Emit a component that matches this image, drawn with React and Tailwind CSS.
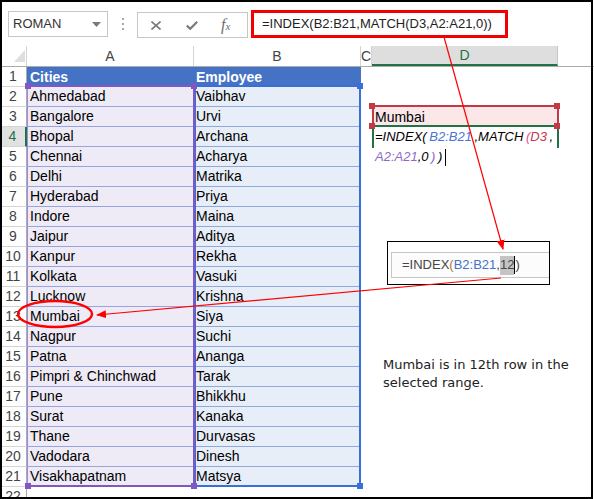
import React from "react";

const rows = [
  ["Ahmedabad", "Vaibhav"],
  ["Bangalore", "Urvi"],
  ["Bhopal", "Archana"],
  ["Chennai", "Acharya"],
  ["Delhi", "Matrika"],
  ["Hyderabad", "Priya"],
  ["Indore", "Maina"],
  ["Jaipur", "Aditya"],
  ["Kanpur", "Rekha"],
  ["Kolkata", "Vasuki"],
  ["Lucknow", "Krishna"],
  ["Mumbai", "Siya"],
  ["Nagpur", "Suchi"],
  ["Patna", "Ananga"],
  ["Pimpri & Chinchwad", "Tarak"],
  ["Pune", "Bhikkhu"],
  ["Surat", "Kanaka"],
  ["Thane", "Durvasas"],
  ["Vadodara", "Dinesh"],
  ["Visakhapatnam", "Matsya"],
];

function RowHeader({ n, active }) {
  return (
    <div
      className={
        active
          ? "w-[27px] h-full shrink-0 flex items-center justify-center bg-[#e1e1e1] border-r-2 border-r-[#217346] border-b border-b-[#d4d4d4] text-[#217346]"
          : "w-[27px] h-full shrink-0 flex items-center justify-center border-r border-r-[#ababab] border-b border-b-[#d4d4d4] text-[#444]"
      }
    >
      {n}
    </div>
  );
}

function Handle({ className }) {
  return <div className={"absolute w-[6px] h-[6px] " + className} />;
}

function FormulaLine1() {
  return (
    <span className="italic text-[13px] text-black whitespace-nowrap">
      =INDEX(<span className="text-[#4a72d4]">&thinsp;B2:B21</span>&thinsp;,MATCH
      <span className="text-[#d8559a]">&thinsp;(</span>
      <span className="text-[#c9394a]">D3</span>&thinsp;,
    </span>
  );
}

function FormulaLine2() {
  return (
    <span className="italic text-[13px] text-black whitespace-nowrap flex items-center">
      <span className="text-[#9068c8]">A2:A21</span>,0
      <span className="text-[#9068c8]">&thinsp;)</span>&thinsp;)
      <span className="ml-[3px] w-px h-[17px] bg-black" />
    </span>
  );
}

export default function App() {
  return (
    <div className="relative w-[594px] h-[499px] overflow-hidden bg-white font-['Liberation_Sans',Arial,sans-serif]">
      {/* formula bar */}
      <div className="h-[46px] flex items-start">
        <div className="mt-[11px] ml-[8px] w-[100px] h-[26px] border border-[#c6c6c6] flex items-center justify-between pl-[4px] pr-[6px] text-[13px] text-[#333]">
          <span>ROMAN</span>
          <svg width="9" height="5" viewBox="0 0 9 5">
            <polygon points="0,0 9,0 4.5,5" fill="#7a7a7a" />
          </svg>
        </div>
        <div className="mt-[18px] ml-[14px] flex flex-col gap-[3px]">
          <div className="w-[2px] h-[2px] bg-[#a8a8a8]" />
          <div className="w-[2px] h-[2px] bg-[#a8a8a8]" />
          <div className="w-[2px] h-[2px] bg-[#a8a8a8]" />
        </div>
        <div className="mt-[12px] ml-[13px] w-[111px] h-[26px] border border-[#c6c6c6] flex items-center pl-[13px]">
          <svg width="10" height="9" viewBox="0 0 10 9">
            <path d="M0.5 0.5 L9.5 8.5 M9.5 0.5 L0.5 8.5" stroke="#7a7a7a" strokeWidth="1.6" />
          </svg>
          <svg className="ml-[25px]" width="12" height="9" viewBox="0 0 12 9">
            <path d="M0.8 4.5 L4.2 7.8 L11.2 0.8" stroke="#7a7a7a" strokeWidth="2.2" fill="none" />
          </svg>
          <span className="ml-[23px] text-[16px] italic text-[#6d6d6d] font-['Liberation_Serif',serif] leading-none">
            f<span className="text-[11px]">x</span>
          </span>
        </div>
        <div className="mt-[10px] ml-[3px] w-[257px] h-[28px] border-[3px] border-[#f00000] flex items-center pl-[8px] text-[13px] text-[#222]">
          =INDEX(B2:B21,MATCH(D3,A2:A21,0))
        </div>
      </div>

      {/* column headers */}
      <div className="h-[21px] flex border-b border-[#ababab] text-[14px] text-[#444]">
        <div className="w-[27px] shrink-0 border-r border-[#d4d4d4] relative">
          <svg className="absolute left-[14px] top-[4px]" width="11" height="12" viewBox="0 0 11 12">
            <polygon points="11,0 11,12 0,12" fill="#dedede" />
          </svg>
        </div>
        <div className="w-[167px] shrink-0 border-r border-[#d4d4d4] flex items-center justify-center">A</div>
        <div className="w-[167px] shrink-0 border-r border-[#d4d4d4] flex items-center justify-center">B</div>
        <div className="w-[11px] shrink-0 border-r border-[#d4d4d4] flex items-center justify-center overflow-hidden">C</div>
        <div className="w-[186px] shrink-0 bg-[#dedede] border-b-2 border-[#217346] border-r border-r-[#c6c6c6] flex items-center justify-center text-[#217346]">D</div>
        <div className="flex-1" />
      </div>

      {/* row 1 */}
      <div className="h-[20px] flex text-[14px]">
        <RowHeader n={1} />
        <div className="w-[167px] shrink-0 bg-[#4472c4] text-white font-bold flex items-center pl-[3px]">Cities</div>
        <div className="w-[167px] shrink-0 bg-[#4472c4] text-white font-bold flex items-center pl-[2px]">Employee</div>
        <div className="flex-1" />
      </div>

      {/* rows 2..21 */}
      {rows.map(([city, emp], i) => {
        const n = i + 2;
        return (
          <div key={n} className="h-[20px] flex text-[14px] text-black">
            <RowHeader n={n} active={n === 4} />
            <div className="w-[167px] shrink-0 bg-[#efebf6] border-b border-[#98a4e0] flex items-center pl-[3px] whitespace-nowrap">{city}</div>
            <div className="w-[167px] shrink-0 bg-[#e8eef8] border-b border-[#8ea9db] flex items-center pl-[2px] whitespace-nowrap">{emp}</div>
            <div className="w-[11px] shrink-0" />
            <div className={"w-[186px] shrink-0 flex items-center pl-[3px] " + (n === 3 ? "bg-[#fbe6e8]" : "")}>
              {n === 3 && <span>Mumbai</span>}
              {n === 4 && <FormulaLine1 />}
              {n === 5 && <FormulaLine2 />}
            </div>
          </div>
        );
      })}

      {/* row 22 */}
      <div className="h-[20px] flex text-[14px]">
        <RowHeader n={22} />
      </div>

      {/* range finder: B2:B21 */}
      <div className="absolute left-[194px] top-[85px] w-[167px] h-[402px] border-2 border-[#3a6fd8]" />
      <Handle className="left-[191px] top-[83px] bg-[#3a6fd8]" />
      <Handle className="left-[357px] top-[83px] bg-[#3a6fd8]" />
      <Handle className="left-[357px] top-[483px] bg-[#3a6fd8]" />

      {/* range finder: A2:A21 */}
      <div className="absolute left-[27px] top-[85px] w-[168px] h-[402px] border-2 border-[#8157c4] border-l-[#9a8ee0] border-l" />
      <Handle className="left-[25px] top-[83px] bg-[#8157c4]" />
      <Handle className="left-[191px] top-[83px] bg-[#8157c4]" />
      <Handle className="left-[25px] top-[483px] bg-[#8157c4]" />
      <Handle className="left-[191px] top-[483px] bg-[#8157c4]" />

      {/* D3 reference */}
      <div className="absolute left-[372px] top-[105px] w-[187px] h-[22px] border-2 border-[#c33a44]" />
      {/* D4 active cell */}
      <div className="absolute left-[372px] top-[125px] w-[187px] h-[23px] border-2 border-b-0 border-[#217346]" />
      <Handle className="left-[369px] top-[103px] bg-[#c33a44]" />
      <Handle className="left-[554px] top-[103px] bg-[#c33a44]" />
      <Handle className="left-[369px] top-[123px] bg-[#c33a44]" />
      <Handle className="left-[554px] top-[123px] bg-[#c33a44]" />

      {/* pasted formula snippet */}
      <div className="absolute left-[387px] top-[241px] w-[163px] h-[44px] border border-black bg-white overflow-hidden">
        <div className="mt-[10px] ml-[3px] w-[170px] h-[26px] border border-[#c6c6c6] bg-[#fcfcfc] flex items-center pl-[10px] text-[13px] text-[#444]">
          =INDEX<span className="text-[#b8742a]">(</span>
          <span className="text-[#4472c4]">B2:B21</span>,
          <span className="bg-[#c4c4c4] h-[19px] flex items-center">12</span>
          <span className="w-px h-[18px] bg-black" />)
        </div>
      </div>

      {/* note */}
      <div className="absolute left-[383px] top-[356px] font-['DejaVu_Sans',Verdana,sans-serif] text-[13px] leading-[18px] text-[#222]">
        Mumbai is in 12th row in the
        <br />
        selected range.
      </div>

      {/* annotations */}
      <svg className="absolute left-0 top-0 pointer-events-none" width="594" height="499" viewBox="0 0 594 499">
        <defs>
          <marker id="ah" markerWidth="10" markerHeight="8" refX="9" refY="4" orient="auto" markerUnits="userSpaceOnUse">
            <polygon points="0,0 10,4 0,8" fill="#f00" />
          </marker>
        </defs>
        <line x1="444" y1="37" x2="503" y2="249" stroke="#f00" strokeWidth="1.2" markerEnd="url(#ah)" />
        <line x1="501" y1="278" x2="97" y2="315" stroke="#f00" strokeWidth="1.2" markerEnd="url(#ah)" />
        <ellipse cx="55" cy="314" rx="37" ry="13" fill="none" stroke="#f00" strokeWidth="2.4" />
      </svg>

      {/* frame */}
      <div className="absolute left-0 top-0 w-[593px] h-[499px] border-2 border-black pointer-events-none" />
    </div>
  );
}
